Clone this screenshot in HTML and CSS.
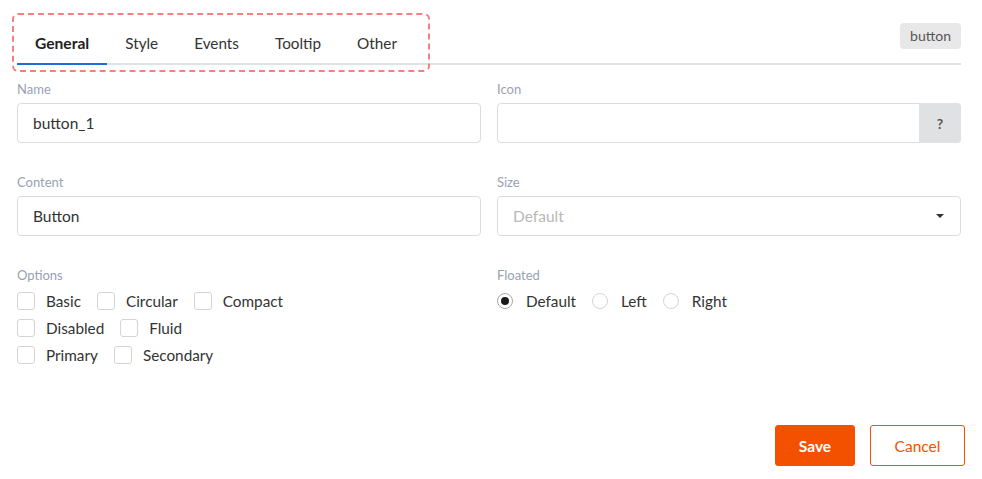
FILE: index.html
```html
<!DOCTYPE html>
<html>
<head>
<meta charset="utf-8">
<link rel="stylesheet" href="styles.css">
</head>
<body>
<div class="page">
  <div class="content">
    <div class="header">
      <div class="tabs">
        <div class="tab active">General</div>
        <div class="tab">Style</div>
        <div class="tab">Events</div>
        <div class="tab">Tooltip</div>
        <div class="tab">Other</div>
      </div>
      <span class="badge">button</span>
      <div class="highlight"></div>
    </div>
    <div class="form">
      <div class="field">
        <label class="lbl">Name</label>
        <div class="input"><span class="val">button_1</span></div>
      </div>
      <div class="field">
        <label class="lbl">Icon</label>
        <div class="input action"><span class="val"></span><span class="help">?</span></div>
      </div>
      <div class="field">
        <label class="lbl">Content</label>
        <div class="input"><span class="val">Button</span></div>
      </div>
      <div class="field">
        <label class="lbl">Size</label>
        <div class="input select"><span class="val placeholder">Default</span><span class="caret"></span></div>
      </div>
      <div class="field">
        <label class="lbl">Options</label>
        <div class="checks">
          <div class="row">
            <span class="cb"><i class="box"></i>Basic</span>
            <span class="cb"><i class="box"></i>Circular</span>
            <span class="cb"><i class="box"></i>Compact</span>
          </div>
          <div class="row">
            <span class="cb"><i class="box"></i>Disabled</span>
            <span class="cb"><i class="box"></i>Fluid</span>
          </div>
          <div class="row">
            <span class="cb"><i class="box"></i>Primary</span>
            <span class="cb"><i class="box"></i>Secondary</span>
          </div>
        </div>
      </div>
      <div class="field">
        <label class="lbl">Floated</label>
        <div class="checks">
          <div class="row">
            <span class="rb"><i class="circle checked"></i>Default</span>
            <span class="rb"><i class="circle"></i>Left</span>
            <span class="rb"><i class="circle"></i>Right</span>
          </div>
        </div>
      </div>
    </div>
  </div>
  <div class="footer">
    <button class="btn primary">Save</button>
    <button class="btn outline">Cancel</button>
  </div>
</div>
</body>
</html>
```
FILE: styles.css
```css
* { box-sizing: border-box; }
html, body { margin: 0; padding: 0; background: #fff; }
body { font-family: Lato, "Open Sans", sans-serif; color: #333; }
.page { width: 982px; padding: 21px 17px 0 17px; }
.content { width: 944px; }
.header {
  position: relative;
  display: flex;
  justify-content: space-between;
  align-items: flex-start;
  border-bottom: 2px solid #e2e2e3;
}
.tabs { display: flex; }
.tab {
  font-size: 15.3px;
  line-height: 20px;
  padding: 12px 18px 10px;
  color: #333;
  margin-bottom: -2px;
  border-bottom: 2px solid transparent;
}
.tab.active { font-weight: 700; font-size: 15.6px; color: #222; border-bottom-color: #1b6fd8; }
.badge {
  margin-top: 2px;
  background: #e8e8e8;
  color: #555;
  font-size: 14px;
  line-height: 14px;
  padding: 6px 10px;
  border-radius: 4px;
}
.highlight {
  position: absolute;
  left: -5px; top: -8px;
  width: 418px; height: 59px;
  border: 2px dashed #f58080;
  border-radius: 6px;
  pointer-events: none;
}
.form {
  display: grid;
  grid-template-columns: 464px 464px;
  column-gap: 16px;
  row-gap: 32px;
  padding-top: 17px;
}
.lbl {
  display: block;
  font-size: 13px;
  line-height: 14px;
  color: #98a1b3;
  margin-bottom: 7px;
}
.input {
  display: flex;
  align-items: center;
  height: 40px;
  border: 1px solid #dcdcdd;
  border-radius: 4px;
  background: #fff;
  font-size: 15.5px;
  color: #333;
}
.val { flex: 1; padding-left: 15px; }
.placeholder { color: #b8b8b8; }
.help {
  width: 42px;
  height: 40px;
  margin: -1px -1px -1px 0;
  background: #e0e1e2;
  border-radius: 0 4px 4px 0;
  display: flex;
  align-items: center;
  justify-content: center;
  font-weight: 700;
  font-size: 14px;
  color: #555;
}
.caret {
  width: 0; height: 0;
  border-left: 4px solid transparent;
  border-right: 4px solid transparent;
  border-top: 4px solid #333;
  margin-right: 16px;
}
.checks { display: flex; flex-direction: column; margin-top: -2px; }
.row { display: flex; height: 27px; align-items: center; gap: 16px; font-size: 15.3px; }
.cb, .rb { display: flex; align-items: center; color: #333; }
.box {
  width: 18px; height: 18px;
  border: 1px solid #d4d4d5;
  border-radius: 3px;
  margin-right: 11px;
}
.circle {
  width: 16px; height: 16px;
  border: 1px solid #d4d4d5;
  border-radius: 50%;
  margin-right: 13px;
  display: flex;
  align-items: center;
  justify-content: center;
}
.circle.checked { border-color: #a8a8a8; }
.circle.checked::after {
  content: "";
  width: 8px; height: 8px;
  border-radius: 50%;
  background: #1a1a1a;
}
.footer {
  display: flex;
  justify-content: flex-end;
  gap: 15px;
  margin-top: 57px;
}
.btn {
  font-family: Lato, "Open Sans", sans-serif;
  font-size: 15.5px;
  height: 41px;
  border-radius: 3px;
  cursor: pointer;
}
.btn.primary {
  width: 80px;
  background: #f35100;
  border: 1px solid #f35100;
  color: #fff;
  font-weight: 700;
}
.btn.outline {
  width: 95px;
  background: #fff;
  border: 1px solid #f35100;
  color: #f35100;
}
```
